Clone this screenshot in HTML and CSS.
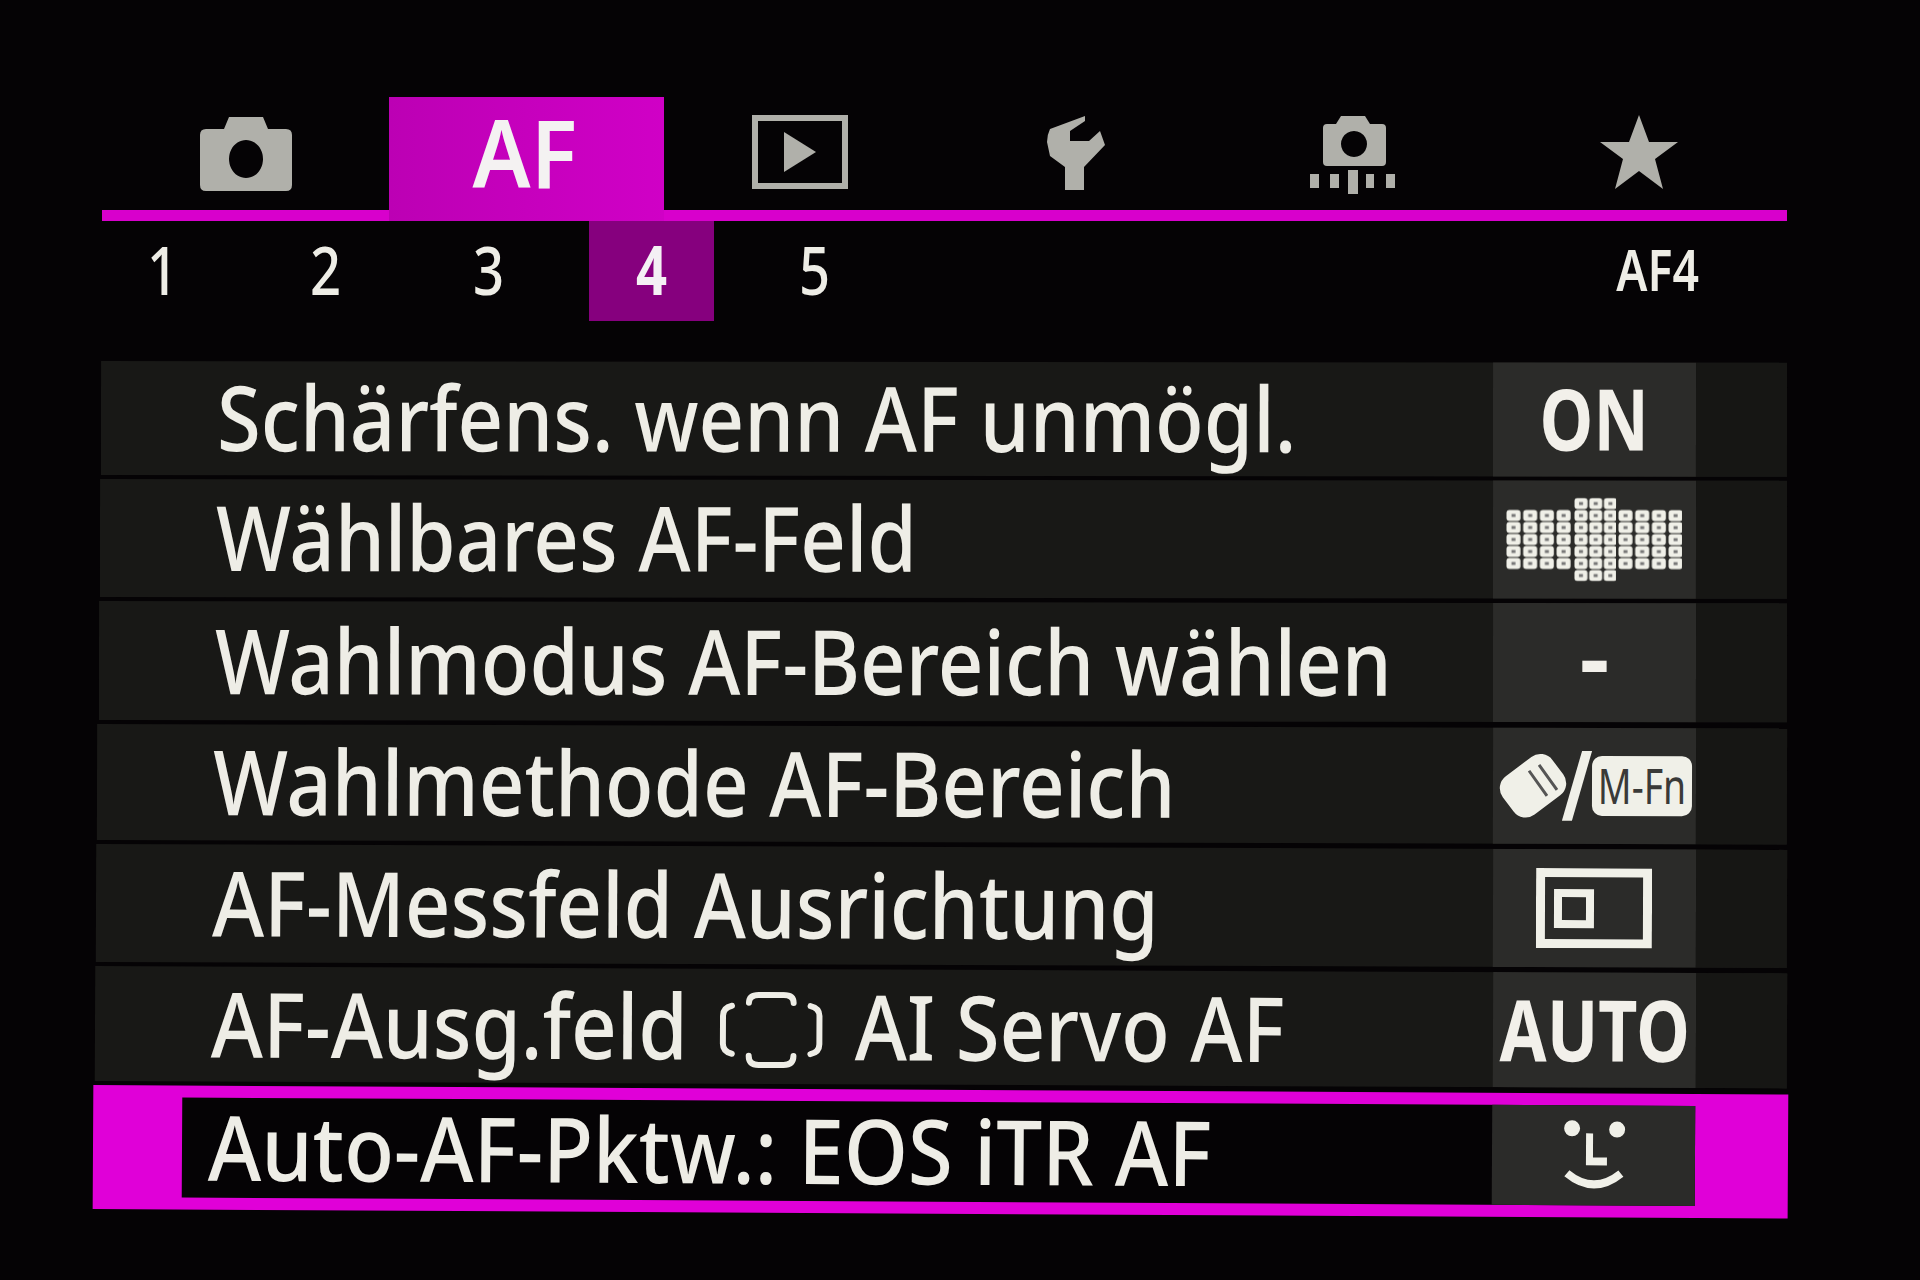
FILE: index.html
```html
<!DOCTYPE html>
<html lang="de">

<head>
    <meta charset="UTF-8">
    <title>AF Menü</title>
    <link rel="stylesheet" href="styles.css">
</head>

<body>
    <div class="screen">

        <div class="tabs">
            <div class="tab">
                <svg class="tab-icon" width="94" height="78" viewBox="0 0 94 78">
                    <path fill-rule="evenodd" d="M30 2h34l5 12h18q6 0 6 6v50q0 6-6 6H7q-6 0-6-6V20q0-6 6-6h18zM47 25a17 19 0 1 0 .01 0z"/>
                </svg>
            </div>
            <div class="tab tab-active"><span class="tab-name">AF</span></div>
            <div class="tab">
                <svg class="tab-icon" width="96" height="74" viewBox="0 0 96 74">
                    <rect x="3" y="3" width="90" height="68" fill="none" stroke="#b0b0aa" stroke-width="6"/>
                    <path d="M32 17l32 20-32 20z"/>
                </svg>
            </div>
            <div class="tab">
                <svg class="tab-icon icon-wrench" width="60" height="78" viewBox="0 0 60 78">
                    <path d="M38 1L3 14Q0 20 0 27L3 41L18 52V75H37V52L58 30L53 16L42 26H23V16L38 6z"/>
                </svg>
            </div>
            <div class="tab">
                <svg class="tab-icon" width="85" height="80" viewBox="0 0 85 80">
                    <path fill-rule="evenodd" d="M31 1h24l5 8h12q4 0 4 4v34q0 4-4 4H17q-4 0-4-4V13q0-4 4-4h9zM44 16a13 13 0 1 0 .01 0z"/>
                    <path d="M0 59h9v14H0zM20 59h9v14h-9zM38 55h10v24H38zM56 59h8v14h-8zM76 59h9v14h-9z"/>
                </svg>
            </div>
            <div class="tab">
                <svg class="tab-icon" width="78" height="74" viewBox="0 0 78 74">
                    <path d="M39 0l10 27h29L55 44l8 30-24-18-24 18 8-30L0 27h29z"/>
                </svg>
            </div>
        </div>

        <div class="subtabs">
            <div class="subtab"><span class="narrow">1</span></div>
            <div class="subtab"><span class="narrow">2</span></div>
            <div class="subtab"><span class="narrow">3</span></div>
            <div class="subtab subtab-active"><span class="narrow">4</span></div>
            <div class="subtab"><span class="narrow">5</span></div>
            <div class="page-name"><span class="narrow">AF4</span></div>
        </div>

        <div class="list">
            <div class="row">
                <div class="label"><span class="label-text">Schärfens. wenn AF unmögl.</span></div>
                <div class="value value-text"><span class="narrow">ON</span></div>
                <div class="row-end"></div>
            </div>
            <div class="row">
                <div class="label"><span class="label-text">Wählbares AF-Feld</span></div>
                <div class="value">
                    <svg class="icon-grid" width="176" height="84" viewBox="0 0 176 84">
                        <defs>
                            <pattern id="dots" width="16.7" height="12" patternUnits="userSpaceOnUse">
                                <rect x="0.5" y="0.5" width="14" height="11" rx="3" fill="#f0f0e8"/>
                                <rect x="5.5" y="4.5" width="4" height="3" fill="#777"/>
                            </pattern>
                            <pattern id="dots-mid" width="14.7" height="12" patternUnits="userSpaceOnUse" patternTransform="translate(68 0)">
                                <rect x="0.5" y="0.5" width="13" height="11" rx="3" fill="#f0f0e8"/>
                                <rect x="5" y="4.5" width="4" height="3" fill="#777"/>
                            </pattern>
                        </defs>
                        <rect x="0" y="12" width="65" height="60" fill="url(#dots)"/>
                        <rect x="68" y="0" width="42" height="84" fill="url(#dots-mid)"/>
                        <g transform="translate(112 0)">
                            <rect x="0" y="12" width="65" height="60" fill="url(#dots)"/>
                        </g>
                    </svg>
                </div>
                <div class="row-end"></div>
            </div>
            <div class="row">
                <div class="label"><span class="label-text">Wahlmodus AF-Bereich wählen</span></div>
                <div class="value value-text value-dash">-</div>
                <div class="row-end"></div>
            </div>
            <div class="row">
                <div class="label"><span class="label-text">Wahlmethode AF-Bereich</span></div>
                <div class="value">
                    <svg class="icon-wheel" width="72" height="66" viewBox="0 0 72 66">
                        <rect x="5" y="9" width="62" height="48" rx="15" transform="rotate(-37 36 33)" fill="#f0f0e8"/>
                        <path d="M32 18l18 25M42 12l18 25" stroke="#555" stroke-width="3" fill="none"/>
                    </svg>
                    <svg class="icon-slash" width="30" height="72" viewBox="0 0 30 72">
                        <path d="M20 1h10L10 71H0z" fill="#f0f0e8"/>
                    </svg>
                    <span class="fn-key"><span class="fn-text">M-Fn</span></span>
                </div>
                <div class="row-end"></div>
            </div>
            <div class="row">
                <div class="label"><span class="label-text">AF-Messfeld Ausrichtung</span></div>
                <div class="value">
                    <svg class="icon-frame" width="116" height="80" viewBox="0 0 116 80">
                        <rect x="4.5" y="4.5" width="107" height="71" fill="none" stroke="#f0f0e8" stroke-width="9"/>
                        <rect x="22" y="25" width="32" height="31" fill="none" stroke="#f0f0e8" stroke-width="8"/>
                    </svg>
                </div>
                <div class="row-end"></div>
            </div>
            <div class="row">
                <div class="label"><span class="label-text">AF-Ausg.feld
                    <svg class="inline-icon" width="118" height="78" viewBox="0 0 105 78" preserveAspectRatio="none">
                        <path d="M30 11q0-8 10-8h25q10 0 10 8M30 64q0 9 10 9h25q10 0 10-9M13 14q-9 2-9 10v28q0 8 9 10M92 14q9 2 9 10v28q0 8-9 10" fill="none" stroke="#eeede6" stroke-width="6" stroke-linecap="round"/>
                    </svg>
                    AI Servo AF</span></div>
                <div class="value value-text"><span class="narrow">AUTO</span></div>
                <div class="row-end"></div>
            </div>
            <div class="row row-selected">
                <div class="label"><span class="label-text">Auto-AF-Pktw.: EOS iTR AF</span></div>
                <div class="value">
                    <svg width="64" height="72" viewBox="0 0 64 72">
                        <circle cx="10" cy="9" r="8" fill="#f0f0e8"/>
                        <circle cx="55" cy="10" r="8" fill="#f0f0e8"/>
                        <path d="M24 14h7v24h14v8H24z" fill="#f0f0e8"/>
                        <path d="M5 54q27 22 54 0" fill="none" stroke="#f0f0e8" stroke-width="8"/>
                    </svg>
                </div>
            </div>
        </div>

    </div>
</body>

</html>
```

FILE: styles.css
```css
html,
body {
    margin: 0;
    background: #050305;
}

body {
    width: 1920px;
    height: 1280px;
    overflow: hidden;
    font-family: "Noto Sans", sans-serif;
}

.screen {
    padding: 97px 133px 0 98px;
    color: #eeede6;
}

/* the menu font is narrower than anything installed */
.narrow {
    display: inline-block;
    transform: scaleX(0.8);
    white-space: nowrap;
}

/* top tabs */
.tabs {
    display: grid;
    grid-template-columns: 287px 275px 272px 278px 276px 297px;
    height: 124px;
    margin-left: 4px;
    background: linear-gradient(#050305 113px, #d800cc 113px);
}

.tab {
    display: flex;
    justify-content: center;
    align-items: flex-start;
    padding-top: 18px;
}

.tab-icon {
    fill: #b0b0aa;
}

.icon-wrench {
    margin-left: 4px;
}

.tab-active {
    background: linear-gradient(90deg, #bc00b4, #d000c6);
    color: #f4f2f2;
    font-size: 94px;
    font-weight: 600;
    line-height: 90px;
    padding-top: 10px;
}

.tab-name {
    display: inline-block;
    transform: scaleX(0.92);
    margin-left: -4px;
}

/* numbers */
.subtabs {
    display: flex;
    gap: 38px;
    height: 100px;
    margin-left: 2px;
}

.subtab {
    width: 125px;
    font-size: 68px;
    font-weight: 500;
    line-height: 96px;
    text-align: center;
}

.subtab-active {
    background: #86007e;
    color: #f4f0f4;
    font-weight: 700;
}

.page-name {
    margin-left: auto;
    margin-right: 78px;
    font-size: 58px;
    font-weight: 600;
    line-height: 96px;
}

/* list */
.list {
    margin-top: 40px;
    display: flex;
    flex-direction: column;
    gap: 4px;
}

.row {
    display: flex;
    height: 116px;
    background: #181816;
    transform-origin: left center;
}

/* the photo of the screen leans a little more towards the bottom */
.row:nth-child(1) {
    height: 114px;
    margin-left: 3px;
    transform: rotate(0.06deg);
}

.row:nth-child(2) {
    height: 118px;
    margin-left: 2px;
    transform: rotate(0.06deg);
}

.row:nth-child(3) {
    height: 119px;
    margin-left: 1px;
    transform: rotate(0.08deg);
}

.row:nth-child(4) {
    height: 116px;
    margin-left: -1px;
    transform: rotate(0.15deg);
}

.row:nth-child(5) {
    height: 118px;
    margin-left: -2px;
    transform: rotate(0.2deg);
}

.row:nth-child(6) {
    height: 115px;
    margin-left: -3px;
    transform: rotate(0.25deg);
}

.label {
    flex: 1;
    min-width: 0;
    display: flex;
    align-items: center;
    padding-left: 116px;
    padding-bottom: 4px;
    font-size: 90px;
    font-weight: 500;
    white-space: nowrap;
}

.label-text {
    display: inline-block;
    flex: none;
    transform: scaleX(0.885);
    transform-origin: left center;
}

.inline-icon {
    vertical-align: -10px;
    margin: 0 12px;
}

.value {
    width: 203px;
    flex: none;
    background: #2b2b29;
    display: flex;
    align-items: center;
    justify-content: center;
    color: #f2f0ea;
}

.value-text {
    font-size: 85px;
    font-weight: 700;
    padding-bottom: 4px;
    box-sizing: border-box;
}

.value-dash {
    font-size: 92px;
    padding-bottom: 14px;
}

.icon-grid {
    margin-right: 2px;
}

.icon-frame {
    margin-right: 2px;
}

.icon-slash {
    margin-left: -7px;
    flex: none;
}

.icon-wheel {
    flex: none;
}

.fn-key {
    flex: none;
    width: 100px;
    height: 60px;
    display: flex;
    justify-content: center;
    background: #f0f0e8;
    color: #3a3a38;
    border-radius: 10px;
    font-size: 49px;
    line-height: 58px;
    white-space: nowrap;
}

.fn-text {
    flex: none;
    display: inline-block;
    transform: scaleX(0.76);
}

.row-end {
    width: 91px;
    flex: none;
    background: #161614;
}

.row-selected {
    height: 100px;
    margin: 0 -1px 0 -5px;
    background: #050305;
    border: solid #e000d8;
    border-width: 12px 93px 12px 89px;
    transform: rotate(0.32deg);
}

.row-selected .label {
    padding-left: 26px;
}

.row-selected .label-text {
    transform: scaleX(0.908);
}
```
